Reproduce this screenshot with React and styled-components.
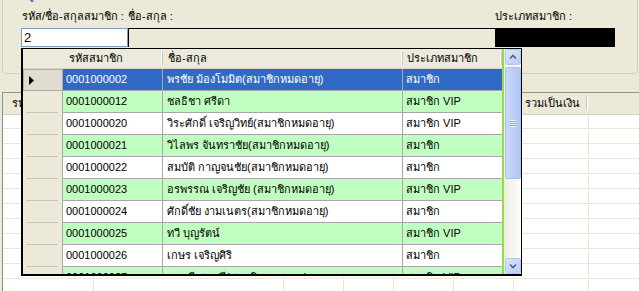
import React from 'react';
import styled, { createGlobalStyle } from 'styled-components';

const Global = createGlobalStyle`
  html, body { margin: 0; padding: 0; background: #ECE9D8; }
  body {
    font-family: Tahoma, "Liberation Sans", "DejaVu Sans", sans-serif;
    font-size: 11px;
    color: #000;
    overflow: hidden;
  }
`;

const Window = styled.div`
  position: relative;
  width: 639px;
  height: 291px;
  overflow: hidden;
  background: #ECE9D8;
`;

const GroupBox = styled.div`
  position: relative;
  box-sizing: border-box;
  height: 78px;
  margin: -4px 1px 0 2px;
  border: 1px solid #D0D0BF;
  border-radius: 4px;
  padding: 11px 0 0 18px;
`;

const Legend = styled.span`
  position: absolute;
  top: -9px;
  left: 7px;
  padding: 0 2px;
  background: #ECE9D8;
  color: #0046D5;
  line-height: 14px;
`;

const FieldGrid = styled.div`
  display: grid;
  grid-template-columns: 107px 367px 120px;
  grid-template-rows: 16px 19px;
  row-gap: 4px;
`;

const Label = styled.div`
  line-height: 16px;
  padding-left: ${p => p.$pad || 0}px;
  white-space: nowrap;
`;

const TextBox = styled.div`
  box-sizing: border-box;
  background: #fff;
  border: 1px solid #7F9DB9;
  padding-left: 2px;
  font-family: "Liberation Sans", sans-serif;
  font-size: 13px;
  line-height: 17px;
`;

const ReadOnlyBox = styled.div`
  box-sizing: border-box;
  background: ${p => (p.$dark ? '#000' : '#ECE9D8')};
  border-top: 1px solid #000;
  border-left: 1px solid #000;
`;

const BackGrid = styled.div`
  margin: 18px 0 0 2px;
  width: 760px;
  border-left: 1px solid #8E8F8F;
  border-top: 1px solid #8E8F8F;
  background: #fff;
`;

const BackRow = styled.div`
  display: grid;
  grid-template-columns: 91px 190px 60px 50px 60px 60px 75px 100px;
  height: ${p => (p.$head ? 21 : 14)}px;
  background: ${p => (p.$head ? '#ECE9D8' : '#fff')};
  border-bottom: 1px solid ${p => (p.$head ? '#D6D2C2' : 'transparent')};
`;

const BackCell = styled.div`
  position: relative;
  box-sizing: border-box;
  border-right: 1px solid ${p => (p.$head ? 'transparent' : '#EBE7D6')};
  border-bottom: 1px solid ${p => (p.$head ? 'transparent' : '#EBE7D6')};
  padding-left: ${p => p.$pad || 9}px;
  line-height: 21px;
  white-space: nowrap;
  overflow: hidden;
  &::after {
    content: '';
    display: ${p => (p.$head ? 'block' : 'none')};
    position: absolute;
    right: 1px;
    top: 4px;
    bottom: 3px;
    width: 1px;
    background: #C7C5B2;
    box-shadow: 1px 0 0 #fff;
  }
`;

const Dropdown = styled.div`
  position: absolute;
  left: 21px;
  top: 48px;
  width: 501px;
  height: 228px;
  box-sizing: border-box;
  border-style: solid;
  border-color: #000;
  border-width: 1px 1px 2px 2px;
  background: #fff;
  display: flex;
  overflow: hidden;
`;

const TableArea = styled.div`
  width: 479px;
  display: flex;
  flex-direction: column;
  overflow: hidden;
`;

const GreenLine = styled.div`
  width: 2px;
  background: #9CD84C;
`;

const ScrollBar = styled.div`
  width: 17px;
  box-sizing: border-box;
  padding-left: 1px;
  display: flex;
  flex-direction: column;
  background: linear-gradient(90deg, #EEEDE5, #FDFDFA);
`;

const ScrollButton = styled.div`
  box-sizing: border-box;
  width: 16px;
  height: 16px;
  margin-top: ${p => (p.$down ? 'auto' : '0')};
  border: 1px solid #B4C8F6;
  border-radius: 2px;
  background: linear-gradient(135deg, #DCE6FE, #B9CCF8);
  display: flex;
  align-items: center;
  justify-content: center;
`;

const Thumb = styled.div`
  box-sizing: border-box;
  width: 16px;
  height: 112px;
  margin-top: 2px;
  border: 1px solid #A9BFEE;
  border-radius: 2px;
  background: linear-gradient(90deg, #CADAFE, #BACDF8 60%, #B2C6F5);
  display: flex;
  align-items: center;
  justify-content: center;
`;

const Grip = styled.div`
  width: 6px;
  height: 7px;
  background: repeating-linear-gradient(180deg, #EEF4FE 0 1px, #8CA6D8 1px 2px);
`;

const GridRow = styled.div`
  display: grid;
  grid-template-columns: 40px 100px 240px 99px;
  height: ${p => (p.$head ? 20 : 22)}px;
  flex: none;
`;

const HeadCell = styled.div`
  position: relative;
  box-sizing: border-box;
  background: #EBEADB;
  border-bottom: 1px solid #D8D4C3;
  padding-left: ${p => p.$pad || 0}px;
  line-height: 19px;
  white-space: nowrap;
  &::after {
    content: '';
    display: ${p => (p.$sep ? 'block' : 'none')};
    position: absolute;
    right: 0;
    top: 3px;
    bottom: 3px;
    width: 1px;
    background: #C7C5B2;
    box-shadow: -1px 0 0 #fff;
  }
`;

const RowHeader = styled.div`
  position: relative;
  box-sizing: border-box;
  background: ${p => (p.$sel ? '#E0DDD0' : '#ECE9D8')};
  border: ${p => (p.$sel ? '1px solid #B0AE9E' : 'none')};
  border-right: 1px solid #A7A6AA;
  display: flex;
  align-items: center;
  padding-left: 5px;
  &::after {
    content: '';
    display: ${p => (p.$sel ? 'none' : 'block')};
    position: absolute;
    left: 3px;
    right: 4px;
    bottom: 0;
    height: 1px;
    background: #C9C6B5;
    box-shadow: 0 1px 0 #fff;
  }
`;

const rowBg = p => (p.$sel ? '#316AC5' : p.$green ? '#C0FFC0' : '#fff');

const Cell = styled.div`
  box-sizing: border-box;
  background: ${rowBg};
  color: ${p => (p.$sel ? '#fff' : '#000')};
  border-right: ${p => (p.$last ? 'none' : '1px solid #A7A6AA')};
  border-bottom: 1px solid #A7A6AA;
  padding-left: ${p => p.$pad || 4}px;
  line-height: 21px;
  white-space: nowrap;
  overflow: hidden;
  font-family: ${p => (p.$mono ? '"Liberation Sans", sans-serif' : 'inherit')};
`;

const Chevron = ({ down }) => (
  <svg width="8" height="6" viewBox="0 0 8 6">
    <polyline
      points={down ? '1,1.5 4,4.5 7,1.5' : '1,4.5 4,1.5 7,4.5'}
      fill="none"
      stroke="#4D6185"
      strokeWidth="1.6"
    />
  </svg>
);

const Pointer = () => (
  <svg width="5" height="9" viewBox="0 0 5 9">
    <polygon points="0,0 5,4.5 0,9" fill="#000" />
  </svg>
);

const members = [
  ['0001000002', 'พรชัย ม้องโมมิต(สมาชิกหมดอายุ)', 'สมาชิก'],
  ['0001000012', 'ชลธิชา ศรีดา', 'สมาชิก VIP'],
  ['0001000020', 'วิระศักดิ์ เจริญวิทย์(สมาชิกหมดอายุ)', 'สมาชิก VIP'],
  ['0001000021', 'วิไลพร จันทราชัย(สมาชิกหมดอายุ)', 'สมาชิก'],
  ['0001000022', 'สมบัติ กาญจนชัย(สมาชิกหมดอายุ)', 'สมาชิก'],
  ['0001000023', 'อรพรรณ เจริญชัย (สมาชิกหมดอายุ)', 'สมาชิก VIP'],
  ['0001000024', 'ศักดิ์ชัย งามเนตร(สมาชิกหมดอายุ)', 'สมาชิก'],
  ['0001000025', 'ทวี บุญรัตน์', 'สมาชิก VIP'],
  ['0001000026', 'เกษร เจริญศิริ', 'สมาชิก'],
  ['0001000027', 'วรรณี สุขศรี(สมาชิกหมดอายุ)', 'สมาชิก VIP'],
];

const backHeads = ['รหัส', '', '', '', '', '', 'รวมเป็นเงิน', ''];

export default function App() {
  return (
    <Window>
      <Global />
      <GroupBox>
        <Legend>ข้อมูลสมาชิก</Legend>
        <FieldGrid>
          <Label $pad={1}>รหัส/ชื่อ-สกุลสมาชิก :</Label>
          <Label>ชื่อ-สกุล :</Label>
          <Label>ประเภทสมาชิก :</Label>
          <TextBox>2</TextBox>
          <ReadOnlyBox />
          <ReadOnlyBox $dark />
        </FieldGrid>
      </GroupBox>

      <BackGrid>
        <BackRow $head>
          {backHeads.map((h, i) => (
            <BackCell key={i} $head $pad={i === 6 ? 11 : 9}>{h}</BackCell>
          ))}
        </BackRow>
        {Array.from({ length: 12 }).map((_, r) => (
          <BackRow key={r}>
            {backHeads.map((_, i) => (
              <BackCell key={i} />
            ))}
          </BackRow>
        ))}
      </BackGrid>

      <Dropdown>
        <TableArea>
          <GridRow $head>
            <HeadCell />
            <HeadCell $pad={6} $sep>รหัสสมาชิก</HeadCell>
            <HeadCell $pad={5} $sep>ชื่อ-สกุล</HeadCell>
            <HeadCell $pad={4} $sep>ประเภทสมาชิก</HeadCell>
          </GridRow>
          {members.map(([id, name, type], i) => {
            const sel = i === 0;
            const green = i % 2 === 1;
            return (
              <GridRow key={id}>
                <RowHeader $sel={sel}>{sel && <Pointer />}</RowHeader>
                <Cell $sel={sel} $green={green} $pad={3} $mono>{id}</Cell>
                <Cell $sel={sel} $green={green} $pad={4}>{name}</Cell>
                <Cell $sel={sel} $green={green} $pad={3} $last>{type}</Cell>
              </GridRow>
            );
          })}
        </TableArea>
        <GreenLine />
        <ScrollBar>
          <ScrollButton><Chevron /></ScrollButton>
          <Thumb><Grip /></Thumb>
          <ScrollButton $down><Chevron down /></ScrollButton>
        </ScrollBar>
      </Dropdown>
    </Window>
  );
}
